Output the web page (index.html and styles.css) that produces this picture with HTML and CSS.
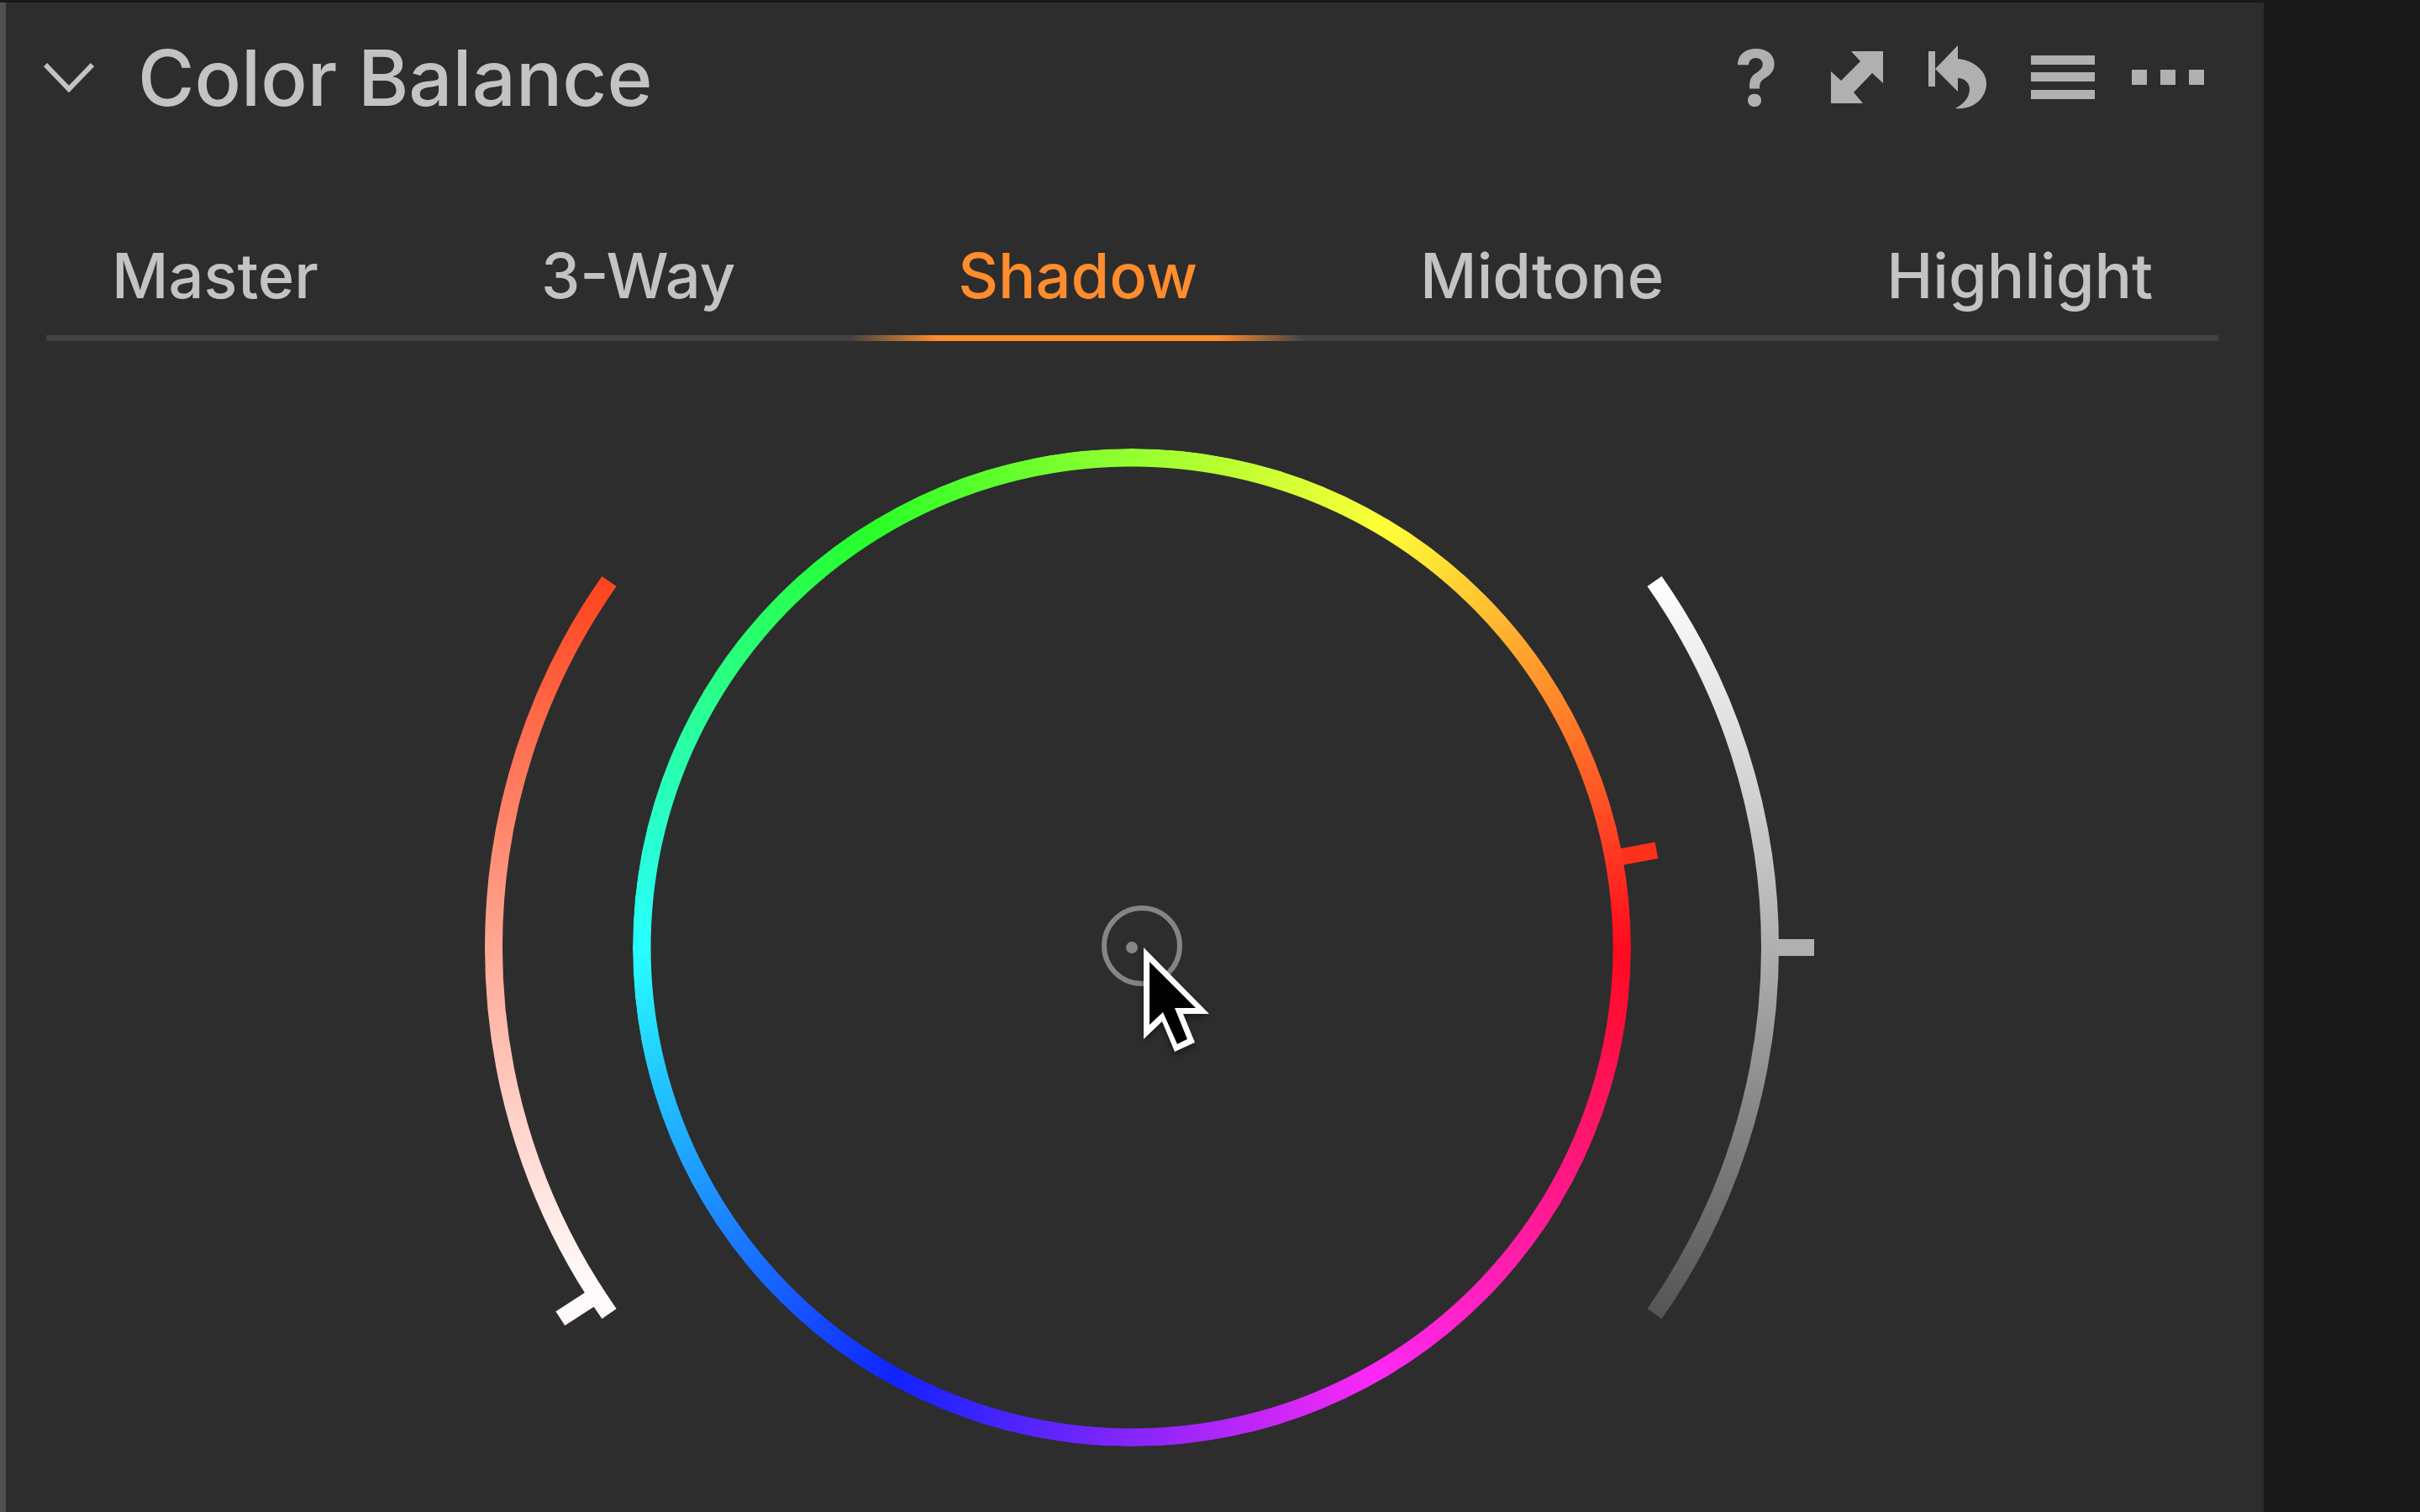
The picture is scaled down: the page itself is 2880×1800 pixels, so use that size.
FILE: index.html
```html
<!DOCTYPE html>
<html lang="en">
<head>
  <meta charset="UTF-8">
  <meta name="viewport" content="width=device-width, initial-scale=1.0">
  <title>Color Balance</title>
  <link rel="stylesheet" href="styles.css">
</head>
<body>
  <main class="panel">
    <header class="panel-header">
      <button type="button" aria-label="Collapse">
        <svg width="60" height="36" viewBox="0 0 60 36"><path d="M2 3L30 32L58 3" fill="none" stroke="#c3c3c3" stroke-width="6"/></svg>
      </button>
      <h1 class="panel-title">Color Balance</h1>
      <div class="panel-tools">
        <button class="tool help" type="button" aria-label="Help">?</button>
        <button class="tool" type="button" aria-label="Expand">
          <svg width="62" height="62" viewBox="0 0 62 62"><path d="M24 0H62V38L49 26L27 49L38 62H0V24L12 35L35 12Z" fill="#b0b0b0"/></svg>
        </button>
        <button class="tool" type="button" aria-label="Reset">
          <svg width="70" height="76" viewBox="0 0 70 76"><path d="M0 7H8V49H0ZM8 28L35 0V16C56 18 69 32 69 45C69 62 55 77 32 75C44 69 49 60 49 52C49 45 43 39 35 39V55Z" fill="#b0b0b0"/></svg>
        </button>
        <button class="tool wide" type="button" aria-label="Presets">
          <svg width="76" height="52" viewBox="0 0 76 52"><path d="M0 0H76V11H0ZM0 20H76V31H0ZM0 41H76V52H0Z" fill="#b0b0b0"/></svg>
        </button>
        <button class="tool" type="button" aria-label="More">
          <svg width="86" height="18" viewBox="0 0 86 18"><path d="M0 0H18V18H0ZM34 0H52V18H34ZM68 0H86V18H68Z" fill="#b0b0b0"/></svg>
        </button>
      </div>
    </header>

    <nav class="tabs">
      <button class="tab" type="button">Master</button>
      <button class="tab" type="button">3-Way</button>
      <button class="tab active" type="button">Shadow</button>
      <button class="tab" type="button">Midtone</button>
      <button class="tab" type="button">Highlight</button>
    </nav>

    <section class="wheel" aria-label="Shadow color wheel">
      <div class="hue-ring"></div>
      <!-- origin is the wheel center -->
      <svg class="dials" viewBox="-830 -600 1660 1200">
        <defs>
          <linearGradient id="saturation" gradientUnits="userSpaceOnUse" x1="0" y1="-440" x2="0" y2="440">
            <stop offset="0" stop-color="#ff431c"/>
            <stop offset="0.5" stop-color="#ffa793"/>
            <stop offset="0.95" stop-color="#fffafa"/>
          </linearGradient>
          <linearGradient id="lightness" gradientUnits="userSpaceOnUse" x1="0" y1="-440" x2="0" y2="440">
            <stop offset="0" stop-color="#ffffff"/>
            <stop offset="0.5" stop-color="#b0b0b0"/>
            <stop offset="1" stop-color="#545454"/>
          </linearGradient>
        </defs>
        <path d="M-622 -436A760 760 0 0 0 -622 436" fill="none" stroke="url(#saturation)" stroke-width="21"/>
        <path d="M622 -436A760 760 0 0 1 622 436" fill="none" stroke="url(#lightness)" stroke-width="21"/>
        <path d="M-811 0H-765" transform="rotate(-33)" stroke="#fffafa" stroke-width="20"/>
        <path d="M768 0H812" stroke="#b0b0b0" stroke-width="20"/>
        <path d="M590 0H635" transform="rotate(-10.5)" stroke="#ff3019" stroke-width="20"/>
        <circle cx="12" cy="-2" r="45" fill="none" stroke="#858585" stroke-width="6"/>
        <circle r="7" fill="#858585"/>
        <g class="pointer">
          <path d="M14 0V109L36 88L51 124L75 113L61 79H92Z" fill="#fff"/>
          <path d="M21 17V92L37 77L54 115L66 109L51 72H76Z" fill="#000"/>
        </g>
      </svg>
    </section>
  </main>
</body>
</html>
```
FILE: styles.css
```css
* {
  box-sizing: border-box;
}
body {
  margin: 0;
  min-height: 100vh;
  display: flex;
  background: #191919;
  color: #c3c3c3;
  font-family: Inter, "Liberation Sans", sans-serif;
}
button {
  padding: 0;
  border: 0;
  background: none;
  color: inherit;
  font: inherit;
  cursor: pointer;
}
svg {
  display: block;
}
.panel {
  flex: 0 0 auto;
  width: 93.55%;
  margin-top: 3px;
  border-left: 7px solid #505050;
  background: #2d2d2d;
}
.panel-header {
  display: flex;
  align-items: center;
  height: 178px;
  padding: 0 54px 0 45px;
}
.panel-title {
  margin: 0 0 0 52px;
  font-size: 92px;
  font-weight: 500;
}
.panel-tools {
  display: flex;
  align-items: center;
  margin-left: auto;
}
.tool {
  display: flex;
  align-items: center;
  justify-content: center;
  width: 120px;
}
.tool.wide {
  width: 130px;
}
.help {
  color: #b0b0b0;
  font-size: 92px;
  font-weight: 700;
}
.tabs {
  display: flex;
  justify-content: space-between;
  height: 225px;
  margin: 0 54px 0 48px;
  border-bottom: 7px solid #424242;
}
.tab {
  position: relative;
  padding: 76px 78px 0;
  font-size: 74px;
  font-weight: 500;
}
.tab.active {
  color: #ff8c2d;
}
/* glow line drawn over the tab bar border */
.tab.active::after {
  content: "";
  position: absolute;
  left: -50px;
  right: -50px;
  bottom: -7px;
  height: 7px;
  background: linear-gradient(90deg, transparent, #ff8c2d 19%, #ff8c2d 81%, transparent);
}
.wheel {
  display: grid;
  place-items: center;
  padding: 122px 8px 0 0;
}
.hue-ring,
.dials {
  grid-area: 1 / 1;
}
.hue-ring {
  width: 1188px;
  height: 1188px;
  border-radius: 50%;
  background: conic-gradient(from 90deg, #ff0a1e, #ff28f5 60deg, #1023ff 119deg, #28ffff 180deg, #28ff28 238deg, #ffff37 301deg, #ff0a1e);
  mask: radial-gradient(closest-side, transparent 572px, #000 573px);
}
.dials {
  width: 1660px;
  height: 1200px;
}
.pointer {
  filter: drop-shadow(0 4px 4px rgba(0, 0, 0, 0.4));
}
```
